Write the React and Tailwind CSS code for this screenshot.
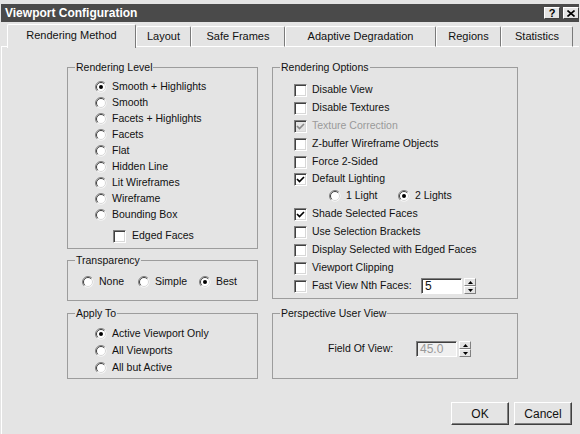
const font = "font-['Liberation_Sans',Arial,sans-serif]";

function Radio({ checked }) {
    return (
        <svg width="12" height="12" viewBox="0 0 12 12" className="shrink-0">
            <circle cx="6" cy="6" r="5.5" fill="#fff" />
            <path d="M2.1 9.9 A5.5 5.5 0 0 1 9.9 2.1" stroke="#808080" strokeWidth="1" fill="none" />
            <path d="M2.8 9.2 A4.5 4.5 0 0 1 9.2 2.8" stroke="#404040" strokeWidth="1" fill="none" />
            <path d="M9.2 2.8 A4.5 4.5 0 0 1 2.8 9.2" stroke="#d8d8d8" strokeWidth="1" fill="none" />
            {checked && <circle cx="6" cy="6" r="2" fill="#000" />}
        </svg>
    );
}

function Check({ checked, disabled }) {
    return (
        <div
            className={`w-[13px] h-[13px] shrink-0 border border-t-[#808080] border-l-[#808080] border-b-white border-r-white shadow-[inset_1px_1px_0_#404040,inset_-1px_-1px_0_#d8d8d8] flex items-center justify-center ${disabled ? "bg-[#e4e4e4]" : "bg-white"}`}
        >
            {checked && (
                <svg width="9" height="9" viewBox="0 0 9 9">
                    <path d="M1 4 L3.5 6.5 L8 2" stroke={disabled ? "#8a8a8a" : "#000"} strokeWidth="1.7" fill="none" />
                </svg>
            )}
        </div>
    );
}

function RadioRow({ label, checked, h = "h-[16px]" }) {
    return (
        <div className={`flex items-center gap-[5px] ${h}`}>
            <Radio checked={checked} />
            <span className="whitespace-nowrap">{label}</span>
        </div>
    );
}

function CheckRow({ label, checked, disabled, h = "h-[18px]" }) {
    return (
        <div className={`flex items-center gap-[5px] ${h}`}>
            <Check checked={checked} disabled={disabled} />
            <span className={`whitespace-nowrap ${disabled ? "text-[#9a9a9a]" : ""}`}>{label}</span>
        </div>
    );
}

// group box: the caption sits on the top border
function Group({ title, className, pad, children }) {
    return (
        <div className={`border border-[#9c9c9c] flex flex-col ${className}`}>
            <span className="-mt-[7px] ml-[7px] self-start px-[1px] leading-[13px] bg-[#e4e4e4] whitespace-nowrap">{title}</span>
            <div className={pad}>{children}</div>
        </div>
    );
}

function Spinner() {
    return (
        <div className="ml-[2px] w-[12px] h-[16px] flex flex-col">
            {[0, 1].map((i) => (
                <div
                    key={i}
                    className="h-[8px] bg-[#e4e4e4] border border-t-white border-l-white border-r-[#808080] border-b-[#808080] flex items-center justify-center"
                >
                    <svg width="5" height="3" viewBox="0 0 5 3">
                        <path d={i === 0 ? "M0 3 L2.5 0 L5 3 Z" : "M0 0 L2.5 3 L5 0 Z"} fill="#000" />
                    </svg>
                </div>
            ))}
        </div>
    );
}

function NumInput({ value, disabled }) {
    return (
        <div className="flex items-center">
            <div
                className={`w-[41px] h-[16px] border border-t-[#808080] border-l-[#808080] border-b-white border-r-white shadow-[inset_1px_1px_0_#404040] pl-[3px] flex items-center leading-none text-[12px] ${disabled ? "bg-[#f0f0f0] text-[#9a9a9a]" : "bg-white"}`}
            >
                {value}
            </div>
            <Spinner />
        </div>
    );
}

const tabs = [
    { label: "Rendering Method", w: "w-[129px]", active: true },
    { label: "Layout", w: "w-[55px]" },
    { label: "Safe Frames", w: "w-[94px]" },
    { label: "Adaptive Degradation", w: "w-[151px]" },
    { label: "Regions", w: "w-[65px]" },
    { label: "Statistics", w: "w-[72px]" },
];

export default function App() {
    return (
        <div className={`w-[580px] h-[434px] bg-[#e4e4e4] px-[1px] pt-[4px] text-[10.5px] text-[#111] ${font} overflow-hidden`}>
            {/* Title bar */}
            <div className="h-[18px] bg-[#4a4a4a] flex items-center justify-between pl-[4px]">
                <span className="text-white font-bold text-[12px] leading-none">Viewport Configuration</span>
                <div className="flex gap-[3px]">
                    <div className="w-[16px] h-[12px] bg-[#e4e4e4] border border-t-white border-l-white border-r-[#404040] border-b-[#404040] flex items-center justify-center font-bold text-[11px] leading-none text-black">?</div>
                    <div className="w-[16px] h-[12px] bg-[#e4e4e4] border border-t-white border-l-white border-r-[#404040] border-b-[#404040] flex items-center justify-center">
                        <svg width="8" height="7" viewBox="0 0 8 7">
                            <path d="M0.5 0.5 L7.5 6.5 M7.5 0.5 L0.5 6.5" stroke="#000" strokeWidth="1.6" />
                        </svg>
                    </div>
                </div>
            </div>

            {/* Tabs */}
            <div className="h-[25px] flex items-end text-[11px]">
                <div className="w-[6px] h-[1px] bg-white" />
                {tabs.map((t) =>
                    t.active ? (
                        <div
                            key={t.label}
                            className={`${t.w} h-[24px] -mb-[1px] relative z-10 bg-[#e4e4e4] border-t border-l border-white border-r border-r-[#7a7a7a] rounded-t-[2px] flex items-center justify-center pb-[3px]`}
                        >
                            {t.label}
                        </div>
                    ) : (
                        <div
                            key={t.label}
                            className={`${t.w} h-[21px] border-t border-l border-b border-white border-r border-r-[#7a7a7a] rounded-t-[2px] flex items-center justify-center`}
                        >
                            {t.label}
                        </div>
                    )
                )}
                <div className="flex-1 h-[1px] bg-white" />
            </div>

            {/* Panel */}
            <div className="border-l border-white h-[387px] pl-[65px] pt-[20px]">
                <div className="flex gap-[14px]">
                    {/* Left column */}
                    <div className="w-[191px] flex flex-col">
                        <Group title="Rendering Level" pad="pl-[27px] pb-[4px] pt-[5px]">
                            <RadioRow label="Smooth + Highlights" checked />
                            <RadioRow label="Smooth" />
                            <RadioRow label="Facets + Highlights" />
                            <RadioRow label="Facets" />
                            <RadioRow label="Flat" />
                            <RadioRow label="Hidden Line" />
                            <RadioRow label="Lit Wireframes" />
                            <RadioRow label="Wireframe" />
                            <RadioRow label="Bounding Box" />
                            <div className="mt-[5px] ml-[18px] h-[16px] flex items-center gap-[6px]">
                                <Check />
                                <span>Edged Faces</span>
                            </div>
                        </Group>

                        <Group title="Transparency" className="mt-[11px]" pad="pl-[14px] pb-[10px] pt-[7px] flex">
                            <div className="w-[56px]"><RadioRow label="None" /></div>
                            <div className="w-[61px]"><RadioRow label="Simple" /></div>
                            <RadioRow label="Best" checked />
                        </Group>

                        <Group title="Apply To" className="mt-[12px]" pad="pl-[27px] pb-[2px] pt-[5px]">
                            <RadioRow label="Active Viewport Only" checked h="h-[17px]" />
                            <RadioRow label="All Viewports" h="h-[17px]" />
                            <RadioRow label="All but Active" h="h-[17px]" />
                        </Group>
                    </div>

                    {/* Right column */}
                    <div className="w-[246px] flex flex-col">
                        <Group title="Rendering Options" pad="pl-[21px] pb-[3px] pt-[7px]">
                            <CheckRow label="Disable View" />
                            <CheckRow label="Disable Textures" />
                            <CheckRow label="Texture Correction" checked disabled />
                            <CheckRow label="Z-buffer Wireframe Objects" />
                            <CheckRow label="Force 2-Sided" />
                            <CheckRow label="Default Lighting" checked h="h-[16px]" />
                            <div className="h-[18px] flex items-center pl-[35px]">
                                <div className="w-[69px]"><RadioRow label="1 Light" /></div>
                                <RadioRow label="2 Lights" checked />
                            </div>
                            <CheckRow label="Shade Selected Faces" checked />
                            <CheckRow label="Use Selection Brackets" />
                            <CheckRow label="Display Selected with Edged Faces" />
                            <CheckRow label="Viewport Clipping" />
                            <div className="h-[18px] flex items-center gap-[5px]">
                                <Check />
                                <span className="w-[104px] whitespace-nowrap">Fast View Nth Faces:</span>
                                <NumInput value="5" />
                            </div>
                        </Group>

                        <Group title="Perspective User View" className="mt-[14px]" pad="pl-[55px] pb-[21px] pt-[21px] flex items-center">
                            <span className="w-[88px]">Field Of View:</span>
                            <NumInput value="45.0" disabled />
                        </Group>
                    </div>
                </div>

                {/* Buttons */}
                <div className="mt-[23px] flex justify-end gap-[5px] pr-[7px]">
                    {["OK", "Cancel"].map((b) => (
                        <button
                            key={b}
                            className="w-[58px] h-[23px] bg-[#e4e4e4] border border-t-white border-l-white border-r-[#404040] border-b-[#404040] shadow-[inset_-1px_-1px_0_#808080] text-[12px]"
                        >
                            {b}
                        </button>
                    ))}
                </div>
            </div>
        </div>
    );
}
